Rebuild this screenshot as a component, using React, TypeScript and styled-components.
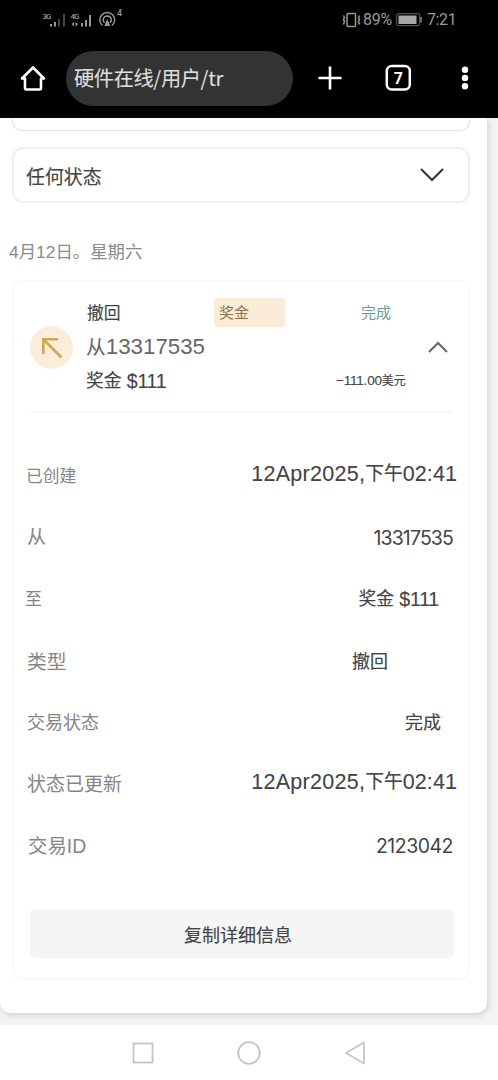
import React from "react";
import styled, { createGlobalStyle } from "styled-components";

const Global = createGlobalStyle`
  * { box-sizing: border-box; }
  body { margin: 0; background: #fff; font-family: "Liberation Sans", "Noto Sans CJK SC", sans-serif; }
`;

const Phone = styled.div`
  width: 498px; height: 1080px; display: flex; flex-direction: column; overflow: hidden;
`;
const Browser = styled.header`
  height: 118px; background: #000; flex: none;
`;
const StatusBar = styled.div`
  height: 40px; display: flex; align-items: center; padding: 0 41px 0 42px;
  justify-content: space-between; color: #999;
`;
const StatusRight = styled.div`
  display: flex; align-items: center; font: 16px/20px Roboto, sans-serif;
`;
const Percent = styled.span` width: 29px; letter-spacing: -0.3px; margin: 0 4px 0 2px; `;
const Clock = styled.span` margin-left: 4px; width: 30px; white-space: nowrap; letter-spacing: -0.4px; `;
const Toolbar = styled.div`
  height: 76px; display: flex; align-items: center; padding: 0 21px 0 19px;
`;
const Address = styled.div`
  width: 227px; height: 55px; border-radius: 28px; background: #333; margin: 0 25px 0 19px;
  padding-left: 8px; display: flex; align-items: center;
`;
const Page = styled.main`
  height: 907px; flex: none; background: #f3f3f3; overflow: hidden;
`;
const Sheet = styled.section`
  width: 487px; height: 895px; background: #fff; border-radius: 0 0 11px 11px;
  box-shadow: 1px 2px 6px rgba(0,0,0,.15); padding: 0 17px 0 12px;
`;
const FieldEnd = styled.div`
  height: 13px; border: 1px solid #e2e2e2; border-top: 0; border-radius: 0 0 10px 10px;
`;
const Select = styled.div`
  height: 56px; margin-top: 16px; border: 2px solid #efefef; border-radius: 11px;
  display: flex; align-items: center; justify-content: space-between; padding: 0 24px 0 12px;
`;
const DateLine = styled.div`
  height: 26px; margin: 36px 0 15px -3px; display: flex; align-items: center;
`;
const Card = styled.article`
  height: 700px; border: 2px solid #f9f9f9; border-radius: 10px; padding: 0 15px 0 16px;
`;
const Summary = styled.div`
  height: 131px; border-bottom: 2px solid #f6f6f6; display: flex; margin-right: 2px; padding-top: 13px;
`;
const Avatar = styled.div`
  width: 43px; height: 43px; border-radius: 50%; background: #faeedb; margin-top: 31px;
  display: flex; align-items: center; justify-content: center;
`;
const Titles = styled.div`
  width: 128px; margin-left: 13px; display: flex; flex-direction: column;
`;
const Line = styled.div<{ $h: number; $x?: number }>`
  height: ${p => p.$h}px; display: flex; align-items: center; padding-left: ${p => p.$x ?? 0}px;
`;
const Badge = styled.div`
  width: 71px; height: 29px; margin-top: 3px; padding-left: 5px; border-radius: 4px;
  background: #faecd6; display: flex; align-items: center;
`;
const Amounts = styled.div` width: 93px; margin-left: 50px; `;
const Toggle = styled.div` margin-top: 44px; `;
const Details = styled.div` margin-top: 33px; `;
const Row = styled.div<{ $left: number; $right: number }>`
  height: 61.6px; display: flex; align-items: center; justify-content: space-between;
  margin-left: ${p => p.$left}px; margin-right: ${p => p.$right}px;
`;
const CopyButton = styled.button`
  width: 424px; height: 49px; margin: 32px 0 0; border: 0; border-radius: 5px; background: #f5f5f5;
  display: flex; align-items: center; justify-content: center; padding: 0 8px 0 0;
`;
const Nav = styled.nav`
  flex: 1; background: #fff; display: flex; align-items: center; justify-content: center; gap: 82px;
`;

type RunProps = { $size: number; $color?: string; $ls?: number; $bold?: number; $font?: string; $down?: number };
const Run = styled.span<RunProps>`
  font-family: ${p => p.$font ?? '"Liberation Sans"'}, "Noto Sans CJK SC", sans-serif;
  font-size: ${p => p.$size}px; line-height: 28px; white-space: pre;
  color: ${p => p.$color ?? "#444"}; letter-spacing: ${p => p.$ls ?? 0}px;
  -webkit-text-stroke: ${p => p.$bold ?? 0}px currentColor;
  padding-top: ${p => p.$down ?? 0}px;
`;
const Group = styled.span<{ $lift?: number }>`
  display: flex; align-items: center; padding-bottom: ${p => p.$lift ?? 0}px;
`;

const Stamp = () => (
  <Group $lift={5}>
    <Run $size={21.5} $ls={0.27} $bold={0.1}>12Apr2025,</Run>
    <Run $size={18.8} $bold={0.15}>下午</Run>
    <Run $size={21.5} $ls={0.1} $bold={0.1}>02:41</Run>
  </Group>
);

const Bonus = ({ lift = 0 }: { lift?: number }) => (
  <Group $lift={lift}>
    <Run $size={17.8} $bold={0.15}>奖金</Run>
    <Run $size={19.6} $ls={-0.25} $bold={0.12}> $111</Run>
  </Group>
);

const rows: { label: string; size: number; left: number; right: number; value: React.ReactNode }[] = [
  { label: "已创建", size: 16.8, left: -4, right: -4, value: <Stamp /> },
  { label: "从", size: 19, left: -3, right: 0, value: <Run $size={19.5} $ls={-0.88} $font="Inter">13317535</Run> },
  { label: "至", size: 17, left: -5, right: 14, value: <Bonus lift={2} /> },
  { label: "类型", size: 19.8, left: -3, right: 65, value: <Run $size={18} $bold={0.15}>撤回</Run> },
  { label: "交易状态", size: 18, left: -3, right: 12, value: <Run $size={18} $bold={0.15}>完成</Run> },
  { label: "状态已更新", size: 19, left: -3, right: -4, value: <Stamp /> },
  { label: "交易ID", size: 19.4, left: -2, right: 0, value: <Run $size={19.5} $ls={-0.5} $font="Inter">2123042</Run> },
];

export default function App() {
  return (
    <Phone>
      <Global />
      <Browser>
        <StatusBar>
          <svg width="82" height="24" viewBox="42 8 82 24" fill="#999">
            <g fontFamily="Roboto" fontSize="8" fontWeight="500">
              <text x="42.5" y="19" textLength="9">3G</text>
              <text x="70.5" y="19" textLength="9">4G</text>
              <text x="117" y="16" fontSize="9">4</text>
            </g>
            <path d="M50 24h2v2.500h-2zM54 22h2v4.500h-2zM81 23h2v3.500h-2zM85 20h2v6.500h-2zM89 15h2v11.500h-2zM71.500 24l2.500-2v4.500zM78 24l-2.500-2v4.500z" />
            <path d="M58 19h2v7.500h-2zM63 14h2v12.500h-2z" fill="#444" />
            <path d="M102.500 25.500a7.400 7.400 0 1 1 9.500 0M104.500 22.800a4 4 0 1 1 5.500 0" fill="none" stroke="#999" strokeWidth="1.500" />
            <path d="M107.300 19l3 7h-6z" />
          </svg>
          <StatusRight>
            <svg width="19" height="18" viewBox="0 0 19 18" fill="none" stroke="#999" strokeWidth="1.500">
              <rect x="5" y="2.500" width="8.500" height="13" rx="1" />
              <path d="M1.500 4.500l1 2-1 2 1 2-1 3M17.500 4.500l-1 2 1 2-1 2 1 3" />
            </svg>
            <Percent>89%</Percent>
            <svg width="27" height="14" viewBox="0 0 27 14">
              <rect x=".7" y=".7" width="23" height="12" rx="1.500" fill="none" stroke="#666" />
              <path d="M2.500 2.500h18v8.500h-18z" fill="#a8a8a8" />
              <path d="M25 4v5.500" stroke="#888" strokeWidth="1.500" />
            </svg>
            <Clock>7:21</Clock>
          </StatusRight>
        </StatusBar>
        <Toolbar>
          <svg width="28" height="28" viewBox="0 0 28 28" fill="none" stroke="#fff" strokeWidth="2.600" strokeLinejoin="round" strokeLinecap="round">
            <path d="M14 3.500L3 14.500h3V24q0 1.500 1.500 1.500h13q1.500 0 1.500-1.500v-9.500h3z" />
          </svg>
          <Address>
            <Run $size={20.2} $ls={-0.35} $color="#dedede" $font='"Noto Sans CJK SC"' $bold={0.1}>硬件在线/用户/tr</Run>
          </Address>
          <svg width="24" height="24" viewBox="0 0 24 24" stroke="#fff" strokeWidth="2.600">
            <path d="M.5 12h23M12 .5v23" />
          </svg>
          <svg style={{ marginLeft: 42 }} width="28" height="28" viewBox="0 0 28 28">
            <rect x="2.800" y="2" width="23" height="23.500" rx="5" fill="none" stroke="#fff" strokeWidth="2.500" />
            <text x="14.300" y="19.500" textAnchor="middle" fill="#fff" fontFamily="Roboto" fontWeight="700" fontSize="16">7</text>
          </svg>
          <svg style={{ marginLeft: 48 }} width="10" height="28" viewBox="0 0 10 28" fill="#fff">
            <circle cx="5" cy="5.700" r="3.200" /><circle cx="5" cy="14" r="3.200" /><circle cx="5" cy="22.300" r="3.200" />
          </svg>
        </Toolbar>
      </Browser>
      <Page>
        <Sheet>
          <FieldEnd />
          <Select>
            <Run $size={18.9} $bold={0.15} $down={5}>任何状态</Run>
            <svg width="24" height="14" viewBox="0 0 24 14" fill="none" stroke="#333" strokeWidth="2">
              <path d="M1 1l11 11L23 1" />
            </svg>
          </Select>
          <DateLine><Run $size={17.4} $color="#8b8b8b">4月12日。星期六</Run></DateLine>
          <Card>
            <Summary>
              <Avatar>
                <svg width="22" height="22" viewBox="0 0 22 22" fill="none" stroke="#d2a84e" strokeWidth="2.600">
                  <path d="M2.300 17V2.300H17M2.500 2.500L20.500 20.500" />
                </svg>
              </Avatar>
              <Titles>
                <Line $h={34} $x={1}><Run $size={16.8} $bold={0.15} $down={3}>撤回</Run></Line>
                <Line $h={35}>
                  <Run $size={19.8} $color="#666">从</Run>
                  <Run $size={22.3} $color="#666">13317535</Run>
                </Line>
                <Line $h={33}><Bonus /></Line>
              </Titles>
              <Badge><Run $size={15} $color="#8c7350" $down={1}>奖金</Run></Badge>
              <Amounts>
                <Line $h={36} $x={26}><Run $size={15} $color="#6aa08b">完成</Run></Line>
                <Line $h={100} $x={1}>
                  <Run $size={13.5} $ls={-0.2} $bold={0.1}>−111.00</Run>
                  <Run $size={12} $bold={0.15}>美元</Run>
                </Line>
              </Amounts>
              <Toggle>
                <svg width="20" height="12" viewBox="0 0 20 12" fill="none" stroke="#666" strokeWidth="2">
                  <path d="M1 11l9-9 9 9" />
                </svg>
              </Toggle>
            </Summary>
            <Details>
              {rows.map(r => (
                <Row key={r.label} $left={r.left} $right={r.right}>
                  <Run $size={r.size} $color="#858585">{r.label}</Run>
                  {r.value}
                </Row>
              ))}
            </Details>
            <CopyButton><Run $size={18} $bold={0.15} $down={4}>复制详细信息</Run></CopyButton>
          </Card>
        </Sheet>
      </Page>
      <Nav>
        <svg width="24" height="24" viewBox="0 0 24 24" fill="none" stroke="#c6c6c6" strokeWidth="1.800"><rect x="2.500" y="2.500" width="19" height="19" /></svg>
        <svg width="24" height="24" viewBox="0 0 24 24" fill="none" stroke="#c6c6c6" strokeWidth="1.800"><circle cx="12" cy="12" r="10.800" /></svg>
        <svg width="24" height="24" viewBox="0 0 24 24" fill="none" stroke="#c6c6c6" strokeWidth="1.800" strokeLinejoin="round"><path d="M21 1.500v21L3 12z" /></svg>
      </Nav>
    </Phone>
  );
}
